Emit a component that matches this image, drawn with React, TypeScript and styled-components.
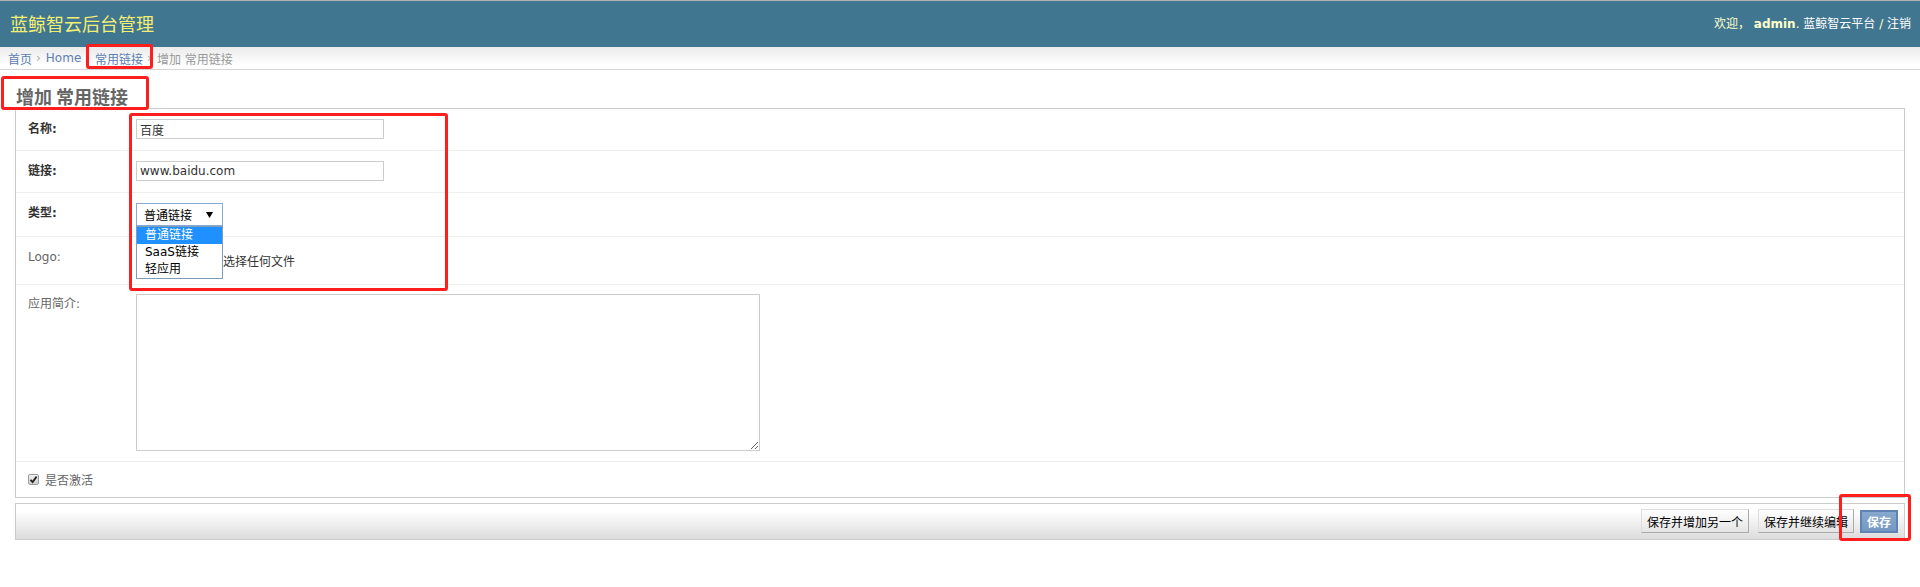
import React from "react";
import styled, { createGlobalStyle } from "styled-components";

const FONT = `"DejaVu Sans", "Noto Sans CJK SC", sans-serif`;

const GlobalStyle = createGlobalStyle`
  html, body { margin: 0; padding: 0; background: #fff; }
  body { font-family: ${FONT}; font-size: 12px; color: #333; }
  * { box-sizing: border-box; }
`;

const Page = styled.div`
  position: relative;
  min-height: 587px;
`;

const Header = styled.header`
  display: flex;
  align-items: center;
  justify-content: space-between;
  height: 47px;
  background: #417690;
  border-top: 1px solid #b3b3b3;
  padding: 0 9px 0 10px;
`;

const Brand = styled.h1`
  margin: 0 0 3px 0;
  font-family: "Noto Sans CJK SC", sans-serif;
  font-size: 18px;
  font-weight: normal;
  line-height: 24px;
  color: #f2ef74;
`;

const UserTools = styled.div`
  font-size: 12px;
  line-height: 17px;
  color: #ffc;
  white-space: pre;
`;

const UserName = styled.strong`
  font-weight: bold;
  color: #ffc;
`;

const ToolLink = styled.a`
  color: #fff;
  text-decoration: none;
`;

const Breadcrumbs = styled.nav`
  display: flex;
  align-items: center;
  height: 23px;
  padding: 0 8px;
  background: linear-gradient(#ebebeb, #fdfdfd 75%, #fff);
  border-bottom: 1px solid #d6d6d6;
  color: #999;
  font-size: 12px;
  white-space: pre;
`;

const Crumb = styled.a`
  color: #5b80b2;
  text-decoration: none;
`;

const Sep = styled.span`
  padding: 0 5px 0 4px;
  color: #aaa;
`;

const Content = styled.main`
  padding: 0 15px;
`;

const Title = styled.h1`
  margin: 14px 0 0 0;
  padding-left: 1px;
  font-family: "Noto Sans CJK SC", sans-serif;
  font-size: 18px;
  line-height: 24px;
  font-weight: bold;
  color: #666;
  white-space: pre;
`;

const Module = styled.fieldset`
  margin: 0;
  padding: 0;
  border: 1px solid #ccc;
  min-width: 0;
`;

const Row = styled.div<{ $pt?: number; $pb?: number }>`
  display: flex;
  align-items: flex-start;
  padding: ${(p) => p.$pt ?? 10}px 12px ${(p) => p.$pb ?? 10}px 12px;
  border-bottom: 1px solid #eee;
  &:last-child {
    border-bottom: none;
  }
`;

const Label = styled.label<{ $required?: boolean }>`
  flex: 0 0 108px;
  padding-top: 2px;
  line-height: 17px;
  font-size: 12px;
  font-weight: ${(p) => (p.$required ? "bold" : "normal")};
  color: ${(p) => (p.$required ? "#333" : "#666")};
`;

const TextInput = styled.input`
  width: 248px;
  height: 20px;
  margin: 0;
  padding: 0 3px;
  border: 1px solid #ccc;
  font-family: ${FONT};
  font-size: 12px;
  color: #333;
  outline: none;
`;

const SelectWrap = styled.div`
  position: relative;
`;

const SelectBox = styled.div`
  display: flex;
  align-items: center;
  justify-content: space-between;
  width: 87px;
  height: 23px;
  padding: 0 9px 0 7px;
  border: 1px solid #86a9d6;
  background: #fff;
  color: #000;
  font-size: 12px;
`;

const Popup = styled.ul`
  position: absolute;
  top: 100%;
  left: 0;
  z-index: 3;
  width: 87px;
  margin: 0;
  padding: 0;
  list-style: none;
  background: #fff;
  border: 1px solid #7f9db9;
`;

const Option = styled.li<{ $active?: boolean }>`
  height: 17px;
  line-height: 17px;
  padding-left: 8px;
  font-size: 12px;
  background: ${(p) => (p.$active ? "#1e90ff" : "#fff")};
  color: ${(p) => (p.$active ? "#fff" : "#000")};
`;

const FileField = styled.div`
  display: flex;
  align-items: center;
  height: 27px;
  font-size: 12px;
  color: #333;
`;

const FileButton = styled.span`
  display: inline-flex;
  align-items: center;
  justify-content: center;
  width: 71px;
  height: 21px;
  margin-right: 4px;
  border: 1px solid #aaa;
  background: #eee;
  font-size: 12px;
`;

const TextArea = styled.textarea`
  width: 624px;
  height: 157px;
  margin: 0;
  padding: 2px 3px;
  border: 1px solid #ccc;
  resize: both;
  font-family: ${FONT};
  font-size: 12px;
  outline: none;
`;

const CheckLine = styled.div`
  display: flex;
  align-items: center;
  height: 15px;
  gap: 6px;
  color: #666;
  font-size: 12px;
`;

const CheckBox = styled.span`
  display: inline-flex;
  align-items: center;
  justify-content: center;
  width: 11px;
  height: 11px;
  border: 1px solid #9a9a9a;
  border-radius: 2px;
  background: linear-gradient(#f0f0f0, #cfcfcf);
`;

const SubmitRow = styled.div`
  display: flex;
  align-items: center;
  justify-content: flex-end;
  margin-top: 5px;
  padding: 5px 6px 6px 6px;
  border: 1px solid #ccc;
  background: linear-gradient(#fff 20%, #dcdcdc);
`;

const Button = styled.button`
  height: 24px;
  margin: 0 0 0 9px;
  padding: 0 5px;
  font-family: ${FONT};
  font-size: 12px;
  color: #000;
  border: 1px solid;
  border-color: #ddd #aaa #aaa #ddd;
  background: linear-gradient(#fff, #e4e4e4);
  white-space: nowrap;
`;

const DefaultButton = styled(Button)`
  height: 23px;
  margin-left: 6px;
  padding: 0 5px;
  border: 2px solid #5f84b4;
  background: linear-gradient(#86a8cd, #7598c2);
  color: #fff;
  font-weight: bold;
`;

const Annotation = styled.div<{ $x: number; $y: number; $w: number; $h: number }>`
  position: absolute;
  left: ${(p) => p.$x}px;
  top: ${(p) => p.$y}px;
  width: ${(p) => p.$w}px;
  height: ${(p) => p.$h}px;
  border: 3px solid #ff1e1e;
  border-radius: 3px;
  pointer-events: none;
  z-index: 5;
`;

export default function App() {
  return (
    <Page>
      <GlobalStyle />
      <Header>
        <Brand>蓝鲸智云后台管理</Brand>
        <UserTools>
          {"欢迎， "}
          <UserName>admin</UserName>
          {". "}
          <ToolLink href="#">蓝鲸智云平台</ToolLink>
          {" / "}
          <ToolLink href="#">注销</ToolLink>
        </UserTools>
      </Header>
      <Breadcrumbs>
        <Crumb href="#">首页</Crumb>
        <Sep>›</Sep>
        <Crumb href="#">Home</Crumb>
        <Sep>›</Sep>
        <Crumb href="#">常用链接</Crumb>
        <Sep>›</Sep>
        <span>增加 常用链接</span>
      </Breadcrumbs>
      <Content>
        <Title>增加 常用链接</Title>
        <Module>
          <Row $pb={11}>
            <Label $required>名称:</Label>
            <TextInput defaultValue="百度" readOnly />
          </Row>
          <Row $pb={11}>
            <Label $required>链接:</Label>
            <TextInput defaultValue="www.baidu.com" readOnly />
          </Row>
          <Row>
            <Label $required>类型:</Label>
            <SelectWrap>
              <SelectBox>
                <span>普通链接</span>
                <svg width="7" height="6" viewBox="0 0 7 6">
                  <polygon points="0,0 7,0 3.5,6" fill="#000" />
                </svg>
              </SelectBox>
              <Popup>
                <Option $active>普通链接</Option>
                <Option>SaaS链接</Option>
                <Option>轻应用</Option>
              </Popup>
            </SelectWrap>
          </Row>
          <Row>
            <Label>Logo:</Label>
            <FileField>
              <FileButton>选择文件</FileButton>
              <span>未选择任何文件</span>
            </FileField>
          </Row>
          <Row $pt={9}>
            <Label>应用简介:</Label>
            <TextArea readOnly />
          </Row>
          <Row>
            <CheckLine>
              <CheckBox>
                <svg width="9" height="9" viewBox="0 0 9 9">
                  <path d="M1.5 4.8 L3.6 7 L7.6 1.6" stroke="#222" strokeWidth="1.8" fill="none" />
                </svg>
              </CheckBox>
              <span>是否激活</span>
            </CheckLine>
          </Row>
        </Module>
        <SubmitRow>
          <Button type="button">保存并增加另一个</Button>
          <Button type="button">保存并继续编辑</Button>
          <DefaultButton type="button">保存</DefaultButton>
        </SubmitRow>
      </Content>
      <Annotation $x={86} $y={44} $w={67} $h={25} />
      <Annotation $x={1} $y={76} $w={148} $h={34} />
      <Annotation $x={129} $y={113} $w={319} $h={178} />
      <Annotation $x={1839} $y={494} $w={72} $h={47} />
    </Page>
  );
}
